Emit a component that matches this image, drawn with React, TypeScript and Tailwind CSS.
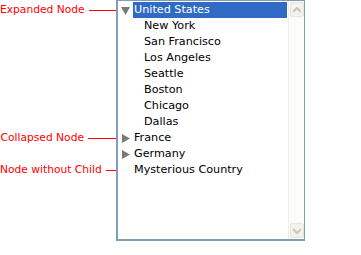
import { ReactNode } from "react"

type Row = {
  label: string
  level: 0 | 1
  arrow?: "down" | "right"
  selected?: boolean
}

const rows: Row[] = [
  { label: "United States", level: 0, arrow: "down", selected: true },
  { label: "New York", level: 1 },
  { label: "San Francisco", level: 1 },
  { label: "Los Angeles", level: 1 },
  { label: "Seattle", level: 1 },
  { label: "Boston", level: 1 },
  { label: "Chicago", level: 1 },
  { label: "Dallas", level: 1 },
  { label: "France", level: 0, arrow: "right" },
  { label: "Germany", level: 0, arrow: "right" },
  { label: "Mysterious Country", level: 0 },
]

// callouts on the left, keyed by row index
const callouts: Record<number, string> = {
  0: "Expanded Node",
  8: "Collapsed Node",
  10: "Node without Child",
}

function Arrow({ dir }: { dir: "down" | "right" }) {
  return dir === "down" ? (
    <svg width="9" height="9" viewBox="0 0 9 9">
      <path d="M0 1h9L4.5 9z" fill="#7a7a7a" />
    </svg>
  ) : (
    <svg width="9" height="9" viewBox="0 0 9 9">
      <path d="M1 0v9l8-4.5z" fill="#7a7a7a" />
    </svg>
  )
}

function ScrollButton({ children }: { children: ReactNode }) {
  return (
    <div className="w-[14px] h-[15px] mx-auto bg-[#f3f3ec] border border-[#e6e6dd] rounded-[2px] flex items-center justify-center">
      {children}
    </div>
  )
}

export default function App() {
  return (
    <div
      className="w-[361px] h-[255px] bg-white flex"
      style={{ fontFamily: "Tahoma, 'DejaVu Sans', sans-serif" }}
    >
      {/* Callout labels */}
      <div className="w-[116px] pt-[2px] flex flex-col">
        {rows.map((_, i) => (
          <div key={i} className="h-[16px] flex items-center justify-end gap-[4px]">
            {callouts[i] && (
              <>
                <span className="text-[10.7px] text-[#ff0000] leading-none whitespace-nowrap">
                  {callouts[i]}
                </span>
                <span className="w-[28px] h-px bg-[#ff0000]" />
              </>
            )}
          </div>
        ))}
      </div>

      {/* Tree box */}
      <div className="w-[189px] h-[241px] border border-[#7f9db9] border-l-2 border-b-2 flex">
        <div className="flex-1 pt-[1px] pr-[1px] flex flex-col">
          {rows.map((row) => (
            <div key={row.label} className="h-[16px] flex items-center">
              <div className="w-[15px] flex items-center justify-center">
                {row.arrow && <Arrow dir={row.arrow} />}
              </div>
              <div
                className={
                  row.level === 1
                    ? "pl-[11px] text-[11.2px] text-black"
                    : row.selected
                      ? "flex-1 h-[16px] pl-[1px] flex items-center text-[11.2px] text-white bg-[#316ac5]"
                      : "pl-[1px] text-[11.2px] text-black"
                }
              >
                {row.label}
              </div>
            </div>
          ))}
        </div>

        {/* Scrollbar */}
        <div className="w-[16px] bg-[#fcfcf8] border-l border-[#eeeee6] flex flex-col justify-between py-[1px]">
          <ScrollButton>
            <svg width="8" height="6" viewBox="0 0 8 6">
              <path d="M0 5l4-4 4 4" stroke="#c6c6bd" strokeWidth="2" fill="none" />
            </svg>
          </ScrollButton>
          <ScrollButton>
            <svg width="8" height="6" viewBox="0 0 8 6">
              <path d="M0 1l4 4 4-4" stroke="#c6c6bd" strokeWidth="2" fill="none" />
            </svg>
          </ScrollButton>
        </div>
      </div>
    </div>
  )
}
